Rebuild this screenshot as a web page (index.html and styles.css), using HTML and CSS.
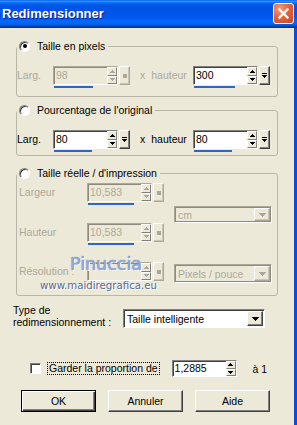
FILE: index.html
```html
<!DOCTYPE html>
<html lang="fr">
<head>
<meta charset="utf-8">
<title>Redimensionner</title>
<link rel="stylesheet" href="styles.css">
</head>
<body>
<div class="window">
  <div class="titlebar">
    <span class="title">Redimensionner</span>
    <span class="close"><svg width="13" height="13" viewBox="0 0 13 13"><path d="M2.5 2.5 L10.5 10.5 M10.5 2.5 L2.5 10.5" stroke="#fff" stroke-width="2.4" stroke-linecap="square"/></svg></span>
  </div>
  <div class="frame">
    <div class="client">

      <fieldset class="group g1">
        <legend><span class="radio on"></span><span class="ltext">Taille en pixels</span></legend>
        <div class="pair">
          <span class="lbl off">Larg.</span>
          <div class="field off">
            <div class="edit"><span class="val">98</span><span class="spin"><i class="sb"><svg width="5" height="3"><path d="M2 0h1v1h1v1h1v1H0V2h1V1h1z"/></svg></i><i class="sb"><svg width="5" height="3"><path d="M0 0h5v1H4v1H3v1H2V2H1V1H0z"/></svg></i></span></div>
            <span class="pop"><span class="sq"></span></span>
            <span class="bar" style="width:39px"></span>
          </div>
          <span class="lbl off xh">x<span class="sp"></span>hauteur</span>
          <div class="field">
            <div class="edit"><span class="val">300</span><span class="spin"><i class="sb"><svg width="5" height="3"><path d="M2 0h1v1h1v1h1v1H0V2h1V1h1z"/></svg></i><i class="sb"><svg width="5" height="3"><path d="M0 0h5v1H4v1H3v1H2V2H1V1H0z"/></svg></i></span></div>
            <span class="pop"><svg width="5" height="6"><path d="M0 0h5v1H0z M0 2h5v1H4v1H3v1H2V4H1V3H0z"/></svg></span>
            <span class="bar" style="width:41px"></span>
          </div>
        </div>
      </fieldset>

      <fieldset class="group g2">
        <legend><span class="radio"></span><span class="ltext">Pourcentage de l'original</span></legend>
        <div class="pair">
          <span class="lbl">Larg.</span>
          <div class="field">
            <div class="edit"><span class="val">80</span><span class="spin"><i class="sb"><svg width="5" height="3"><path d="M2 0h1v1h1v1h1v1H0V2h1V1h1z"/></svg></i><i class="sb"><svg width="5" height="3"><path d="M0 0h5v1H4v1H3v1H2V2H1V1H0z"/></svg></i></span></div>
            <span class="pop"><svg width="5" height="6"><path d="M0 0h5v1H0z M0 2h5v1H4v1H3v1H2V4H1V3H0z"/></svg></span>
            <span class="bar" style="width:38px"></span>
          </div>
          <span class="lbl xh">x<span class="sp"></span>hauteur</span>
          <div class="field">
            <div class="edit"><span class="val">80</span><span class="spin"><i class="sb"><svg width="5" height="3"><path d="M2 0h1v1h1v1h1v1H0V2h1V1h1z"/></svg></i><i class="sb"><svg width="5" height="3"><path d="M0 0h5v1H4v1H3v1H2V2H1V1H0z"/></svg></i></span></div>
            <span class="pop"><svg width="5" height="6"><path d="M0 0h5v1H0z M0 2h5v1H4v1H3v1H2V4H1V3H0z"/></svg></span>
            <span class="bar" style="width:38px"></span>
          </div>
        </div>
      </fieldset>

      <fieldset class="group g3">
        <legend><span class="radio"></span><span class="ltext">Taille réelle / d'impression</span></legend>
        <div class="real">
          <span class="lbl off r1">Largeur</span>
          <div class="field off r1 c2">
            <div class="edit"><span class="val">10,583</span><span class="spin"><i class="sb"><svg width="5" height="3"><path d="M2 0h1v1h1v1h1v1H0V2h1V1h1z"/></svg></i><i class="sb"><svg width="5" height="3"><path d="M0 0h5v1H4v1H3v1H2V2H1V1H0z"/></svg></i></span></div>
            <span class="pop"><span class="sq"></span></span>
            <span class="bar" style="width:46px"></span>
          </div>
          <div class="combo off cm"><span class="ctext">cm</span><span class="cbtn"><svg width="7" height="4"><path d="M0 0h7v1H6v1H5v1H4v1H3V3H2V2H1V1H0z"/></svg></span></div>
          <span class="lbl off r3">Hauteur</span>
          <div class="field off r3 c2">
            <div class="edit"><span class="val">10,583</span><span class="spin"><i class="sb"><svg width="5" height="3"><path d="M2 0h1v1h1v1h1v1H0V2h1V1h1z"/></svg></i><i class="sb"><svg width="5" height="3"><path d="M0 0h5v1H4v1H3v1H2V2H1V1H0z"/></svg></i></span></div>
            <span class="pop"><span class="sq"></span></span>
            <span class="bar" style="width:46px"></span>
          </div>
          <span class="lbl off r5">Résolution :</span>
          <div class="field off r5 c2">
            <div class="edit"><span class="val"></span><span class="spin"><i class="sb"><svg width="5" height="3"><path d="M2 0h1v1h1v1h1v1H0V2h1V1h1z"/></svg></i><i class="sb"><svg width="5" height="3"><path d="M0 0h5v1H4v1H3v1H2V2H1V1H0z"/></svg></i></span></div>
            <span class="pop"><span class="sq"></span></span>
          </div>
          <div class="combo off px"><span class="ctext">Pixels / pouce</span><span class="cbtn"><svg width="7" height="4"><path d="M0 0h7v1H6v1H5v1H4v1H3V3H2V2H1V1H0z"/></svg></span></div>
          <span class="wm-name">Pinuccia</span>
          <span class="wm-url">www.maidiregrafica.eu</span>
        </div>
      </fieldset>

      <div class="typerow">
        <span class="tlabel">Type de<br>redimensionnement :</span>
        <div class="combo tcombo"><span class="ctext">Taille intelligente</span><span class="cbtn"><svg width="7" height="4"><path d="M0 0h7v1H6v1H5v1H4v1H3V3H2V2H1V1H0z"/></svg></span></div>
      </div>

      <div class="keeprow">
        <span class="chk"></span>
        <span class="klabel">Garder la proportion de</span>
        <div class="edit kedit"><span class="val">1,2885</span><span class="spin"><i class="sb"><svg width="5" height="3"><path d="M2 0h1v1h1v1h1v1H0V2h1V1h1z"/></svg></i><i class="sb"><svg width="5" height="3"><path d="M0 0h5v1H4v1H3v1H2V2H1V1H0z"/></svg></i></span></div>
        <span class="ratio">à 1</span>
      </div>

      <div class="buttons">
        <button class="btn default">OK</button>
        <button class="btn">Annuler</button>
        <button class="btn">Aide</button>
      </div>

    </div>
  </div>
</div>
</body>
</html>
```

FILE: styles.css
```css
* { box-sizing: border-box; }
html, body { margin: 0; padding: 0; }
body {
  width: 297px;
  height: 425px;
  overflow: hidden;
  background: #ECE9D8;
  font-family: "Liberation Sans", Arial, sans-serif;
  font-size: 10.5px;
  color: #000;
}
.window {
  width: 297px;
  height: 425px;
  display: flex;
  flex-direction: column;
}
.titlebar {
  height: 28px;
  flex: none;
  display: flex;
  align-items: center;
  justify-content: space-between;
  padding: 0 3px 1px 2px;
  background: linear-gradient(to bottom, #0058EE 0%, #3593FF 4%, #288EFF 6%, #127DFF 8%, #036FFC 10%, #0262EE 14%, #0057E5 20%, #0054E3 24%, #0055EB 56%, #005BF5 66%, #026AFE 76%, #0062EF 86%, #0052D6 92%, #0040AB 94%, #003092 100%);
}
.title {
  color: #fff;
  font-weight: bold;
  font-size: 13px;
  text-shadow: 1px 1px 0 #0a1a80;
}
.close {
  width: 21px;
  height: 21px;
  border: 1px solid #fff;
  border-radius: 3px;
  background: radial-gradient(circle at 30% 25%, #F29A7C 0%, #E2643F 45%, #CC4520 100%);
  display: flex;
  align-items: center;
  justify-content: center;
}
.frame {
  flex: 1;
  display: flex;
  border-right: 3px solid #0A4CDC;
}
.client {
  flex: 1;
  display: flex;
  flex-direction: column;
}

/* group boxes */
.group {
  margin: 0 0 0 16px;
  width: 262px;
  min-width: 0;
  border: 1px solid #BAB6A6;
  border-radius: 3px;
  padding: 0;
}
.group legend {
  padding: 0 3px 0 2px;
  line-height: 14px;
  height: 14px;
  display: flex;
  align-items: center;
}
.ltext { margin-left: 7px; }
.radio {
  width: 11px;
  height: 11px;
  border-radius: 50%;
  background: #fff;
  border: 1px solid;
  border-color: #808080 #fff #fff #808080;
  box-shadow: inset 1px 1px 0 #404040;
  display: flex;
  align-items: center;
  justify-content: center;
}
.radio.on::after {
  content: "";
  width: 4px;
  height: 4px;
  border-radius: 50%;
  background: #000;
}
.g1 { margin-top: 11px; padding: 13px 0 8px; }
.g2 { margin-top: 6px; padding: 13px 0 3px; }
.g3 { margin-top: 10px; padding: 3px 0 11px; }

.pair {
  display: grid;
  grid-template-columns: 36px 87px 53px 77px;
  align-items: start;
}
.lbl { line-height: 19px; white-space: nowrap; }
.off { color: #ACA899; }
.sp { display: inline-block; width: 6px; }

/* numeric field */
.field {
  display: grid;
  grid-template-columns: 65px 11px;
  grid-template-rows: 19px 2px;
  column-gap: 1px;
  row-gap: 1px;
}
.edit {
  width: 65px;
  height: 19px;
  display: flex;
  align-items: stretch;
  background: #fff;
  border: 1px solid;
  border-color: #808080 #fff #fff #808080;
  box-shadow: inset 1px 1px 0 #404040;
}
.field.off .edit {
  background: #ECE9D8;
  border-color: #ACA899 #fff #fff #ACA899;
  box-shadow: inset 1px 1px 0 #8E8B7D;
}
.val {
  flex: 1;
  line-height: 17px;
  padding-left: 2px;
}
.spin {
  width: 10px;
  display: flex;
  flex-direction: column;
}
.sb {
  flex: 1;
  display: flex;
  align-items: center;
  justify-content: center;
  background: #ECE9D8;
  border: 1px solid;
  border-color: #fff #808080 #808080 #fff;
}
.sb svg { fill: #000; display: block; }
.off .sb svg { fill: #ACA899; }
.pop {
  height: 19px;
  display: flex;
  align-items: center;
  justify-content: center;
  background: #ECE9D8;
  border: 1px solid;
  border-color: #fff #404040 #404040 #fff;
  box-shadow: inset -1px -1px 0 #808080;
}
.pop svg { fill: #000; display: block; }
.field.off .pop { border-color: #fff #ACA899 #ACA899 #fff; box-shadow: inset -1px -1px 0 #C9C6B8; }
.sq { width: 4px; height: 4px; background: #ACA899; }
.bar {
  grid-column: 1;
  grid-row: 2;
  height: 2px;
  margin-left: 1px;
  background: #2F66CC;
}

/* real size grid */
.real {
  position: relative;
  display: grid;
  grid-template-columns: 70px 87px 98px;
  grid-template-rows: 22px 18px 22px 17px 22px;
}
.real .lbl { padding-left: 2px; grid-column: 1; }
.r1 { grid-row: 1; }
.r3 { grid-row: 3; }
.r5 { grid-row: 5; }
.c2 { grid-column: 2; }
.cm { grid-row: 2; grid-column: 3; margin-top: 1px; height: 17px; }
.px { grid-row: 5; grid-column: 3; margin-top: 2px; height: 19px; }

/* combo */
.combo {
  display: flex;
  background: #fff;
  border: 1px solid;
  border-color: #808080 #fff #fff #808080;
  box-shadow: inset 1px 1px 0 #404040;
  padding: 1px 1px 1px 1px;
}
.combo.off {
  background: #ECE9D8;
  color: #ACA899;
  border-color: #ACA899 #fff #fff #ACA899;
  box-shadow: inset 1px 1px 0 #8E8B7D, inset -1px -1px 0 #8E8B7D;
}
.ctext {
  flex: 1;
  padding-left: 2px;
  display: flex;
  align-items: center;
  white-space: nowrap;
}
.cbtn {
  width: 16px;
  display: flex;
  align-items: center;
  justify-content: center;
  background: #ECE9D8;
  border: 1px solid;
  border-color: #fff #404040 #404040 #fff;
  box-shadow: inset -1px -1px 0 #808080;
}
.cbtn svg { fill: #000; display: block; }
.combo.off .cbtn { border-color: #fff #ACA899 #ACA899 #fff; box-shadow: inset -1px -1px 0 #C9C6B8; }
.combo.off .cbtn svg { fill: #ACA899; }

/* watermark overlay */
.wm-name {
  position: absolute;
  left: 53px;
  top: 72px;
  font-family: "DejaVu Sans", sans-serif;
  font-size: 17.5px;
  line-height: 18px;
  color: #8FA9E0;
  text-shadow: 0 0 1px #5D6F9E, 1px 1px 0 #fff;
}
.wm-url {
  position: absolute;
  left: 23px;
  top: 97px;
  font-family: "DejaVu Sans", sans-serif;
  font-size: 10.2px;
  line-height: 11px;
  color: #56699A;
  text-shadow: 1px 1px 0 #fff;
}

/* type row */
.typerow {
  margin-top: 8px;
  display: flex;
  align-items: flex-end;
}
.tlabel {
  margin-left: 13px;
  width: 110px;
  line-height: 12px;
}
.tcombo {
  width: 142px;
  height: 19px;
}

/* keep proportion */
.keeprow {
  margin-top: 32px;
  display: flex;
  align-items: center;
  height: 17px;
}
.chk {
  margin-left: 30px;
  width: 11px;
  height: 11px;
  background: #fff;
  border: 1px solid;
  border-color: #808080 #fff #fff #808080;
  box-shadow: inset 1px 1px 0 #404040;
}
.klabel {
  margin-left: 7px;
  padding: 0 1px;
  line-height: 11px;
  outline: 1px dotted #000;
}
.kedit { margin-left: 13px; height: 17px; }
.kedit .val { line-height: 15px; }
.ratio { margin-left: 16px; }

/* buttons */
.buttons {
  margin-top: 13px;
  margin-left: 21px;
  display: flex;
  gap: 12px;
}
.btn {
  width: 75px;
  height: 22px;
  padding: 0;
  font-family: "Liberation Sans", Arial, sans-serif;
  font-size: 10.5px;
  color: #000;
  background: #ECE9D8;
  border: 1px solid;
  border-color: #fff #404040 #404040 #fff;
  box-shadow: inset -1px -1px 0 #808080;
}
.btn.default {
  border-color: #000;
  box-shadow: inset 1px 1px 0 #fff, inset -1px -1px 0 #404040, inset -2px -2px 0 #808080;
}
```
